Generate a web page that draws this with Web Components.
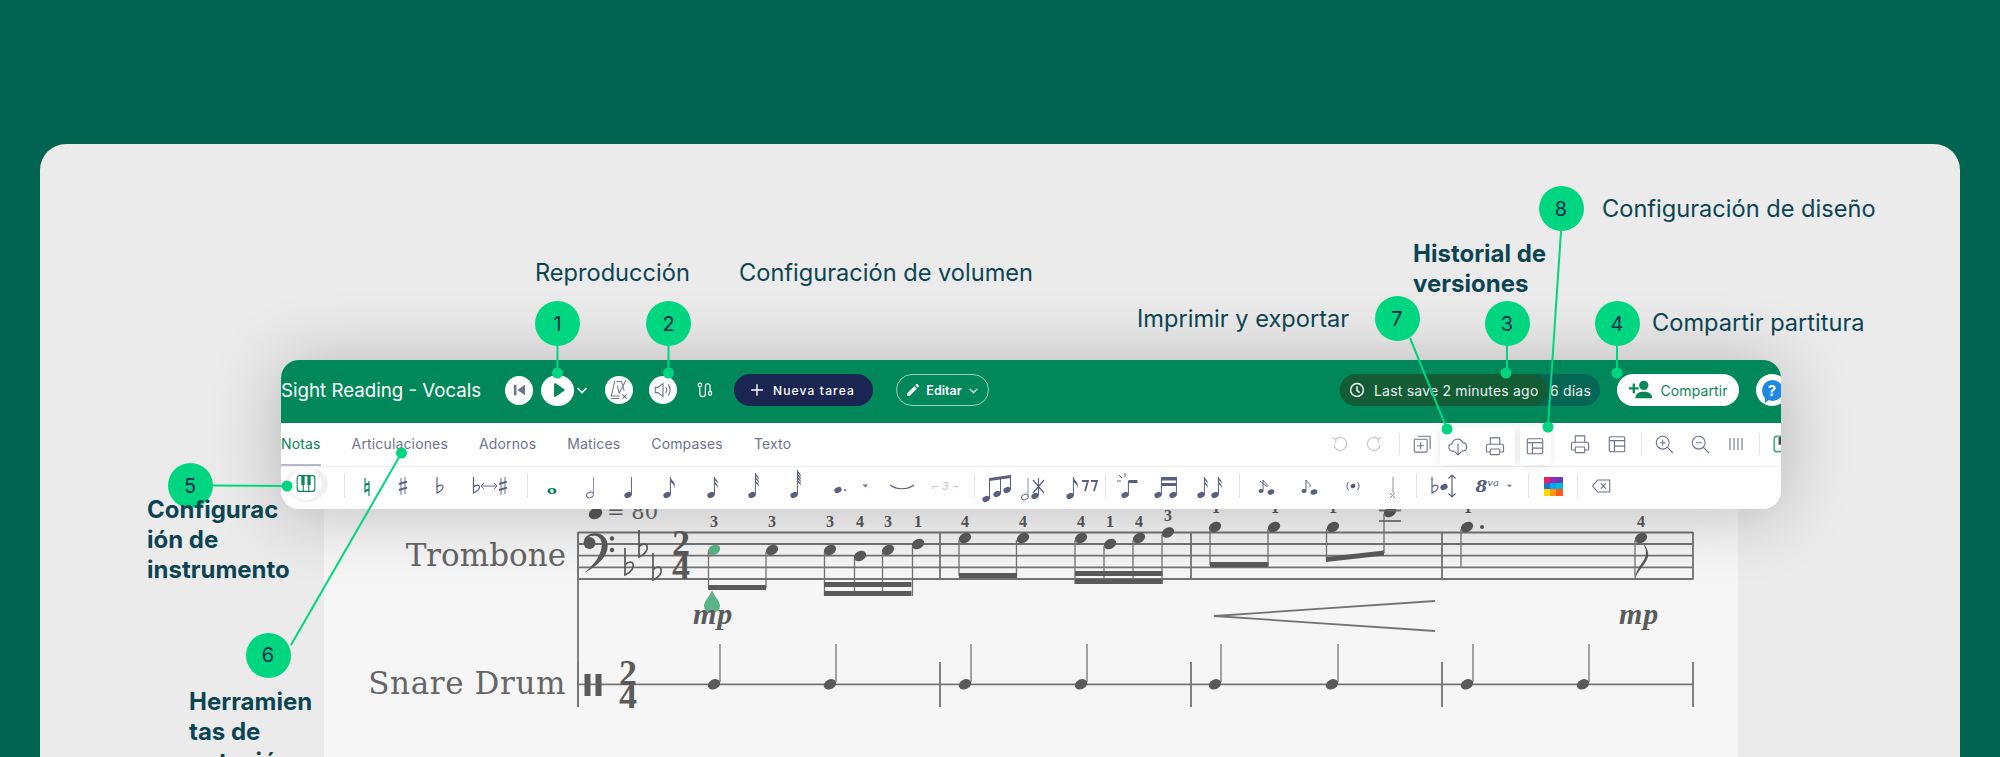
<!DOCTYPE html>
<html lang="es">
<head>
<meta charset="utf-8">
<title>Sight Reading</title>
<style>
  html, body { margin: 0; height: 757px; overflow: hidden; background: #006450; }
</style>
</head>
<body>
<sr-page>
  <sr-app></sr-app>
  <sr-score></sr-score>
  <sr-callouts>
    <sr-pin n="1" x="557.5" y="323.5"></sr-pin>
    <sr-pin n="2" x="668.5" y="323.5"></sr-pin>
    <sr-pin n="3" x="1507" y="323.5"></sr-pin>
    <sr-pin n="4" x="1617" y="323.5"></sr-pin>
    <sr-pin n="5" x="190" y="485.5"></sr-pin>
    <sr-pin n="6" x="268" y="655"></sr-pin>
    <sr-pin n="7" x="1397" y="318.5"></sr-pin>
    <sr-pin n="8" x="1561" y="208.5"></sr-pin>
    <sr-label x="535" y="258">Reproducción</sr-label>
    <sr-label x="739" y="258">Configuración de volumen</sr-label>
    <sr-label x="1137" y="304">Imprimir y exportar</sr-label>
    <sr-label x="1602" y="194">Configuración de diseño</sr-label>
    <sr-label x="1652" y="308">Compartir partitura</sr-label>
    <sr-label x="1413" y="239" bold>Historial de<br>versiones</sr-label>
    <sr-label x="147" y="495" bold>Configurac<br>ión de<br>instrumento</sr-label>
    <sr-label x="189" y="687" bold>Herramien<br>tas de<br>notación</sr-label>
  </sr-callouts>
</sr-page>

<script>
// colores compartidos de los iconos
const INK = '#6d7394';
const NOTE = '#585f80';
const SOFT = '#c4c6d0';
const GREEN = '#0a8659';

const head = (x, y = 23, c = NOTE) => `<ellipse cx="${x}" cy="${y}" rx="3.800" ry="2.800" fill="${c}" transform="rotate(-25 ${x} ${y})"/>`;
const stem = (x, y1, y2 = 5, c = NOTE) => `<path d="M${x} ${y1}V${y2}" stroke="${c}" stroke-width="1" fill="none"/>`;
const flag = (x, y) => `<path d="M${x} ${y}c1 4 6 5 4 11c0-3-2-5-4-6z" fill="${NOTE}"/>`;
const tick = (x, y) => `<path d="M${x} ${y}c.5 2 4 3 3.500 7c-.5-2-2-3-3.500-4z" fill="${NOTE}"/>`;
const ticks = (x, y, n, step) => Array.from({ length: n }, (_, i) => tick(x, y + i * step)).join('');
const quarter = (x, y = 23) => head(x, y) + stem(x + 3.4, y);
const flatSign = (x, y = 14, c = NOTE) => `<path d="M${x} ${y - 9}V${y + 7}c4-2 6-4 6-6s-3-3-6 0" stroke="${c}" stroke-width="1.200" fill="none"/>`;
const sharpSign = (x, y = 14, c = NOTE) => `<path d="M${x - 2} ${y - 8}V${y + 9}M${x + 2} ${y - 9}V${y + 8}" stroke="${c}" stroke-width=".9" fill="none"/><path d="M${x - 4} ${y - 2}l8-2.400M${x - 4} ${y + 4}l8-2.400" stroke="${c}" stroke-width="1.900" fill="none"/>`;
const caret = '<path d="M9 12h8l-4 4z" fill="' + INK + '"/>';

const ICONS = {
  // barra superior
  skip: `<path d="M8 8h3v12H8zM21 8v12l-9-6z" fill="${INK}"/>`,
  play: `<path d="M9 6.500c0-1 1-1.500 2-1l11 7.400c.8.500.8 1.600 0 2.100L11 22.500c-1 .5-2 0-2-1z" fill="${GREEN}"/>`,
  chev: '<path d="M7 11l7 7 7-7" stroke="#fff" stroke-width="2.400" fill="none"/>',
  metro: `<g stroke="${INK}" stroke-width="1.200" fill="none"><path d="M11 4h6l3 11M9 4L5 21h10"/><path d="M5 24h9M12 9l2 8M22 3l-8 15"/></g><path d="M18 19l5 5M23 19l-5 5" stroke="${INK}" stroke-width="1.300"/>`,
  volume: `<g stroke="${INK}" stroke-width="1.300" fill="none"><path d="M5 11v6h3l6 4.500V6.500L8 11z"/><path d="M17 10.500c1.500 2 1.500 5 0 7M20 7.500c3 3.500 3 9.500 0 13"/></g>`,
  mix: '<g stroke="#fff" stroke-width="1.500" fill="none"><circle cx="7.500" cy="7.500" r="2.200"/><path d="M7.500 9.700v9c0 5 7 5 7 0V9c0-4 6-4 6 0v7"/><rect x="18.700" y="16" width="3.600" height="4.500" rx="1"/></g>',
  plus: '<path d="M14 5v18M5 14h18" stroke="#fff" stroke-width="2.200" fill="none"/>',
  pencil: '<path d="M5 19L16 8l4 4L9 23H5zM17.500 6.500L19 5c.6-.6 1.400-.6 2 0l2 2c.6.600.6 1.400 0 2l-1.500 1.500z" fill="#fff"/>',
  clock: '<circle cx="14" cy="14" r="7.500" stroke="#fff" stroke-width="1.700" fill="none"/><path d="M14 9.500V14.500l3 2.500" stroke="#fff" stroke-width="1.700" fill="none"/>',
  share: `<g fill="${GREEN}"><circle cx="17" cy="9" r="5"/><path d="M8 22c0-4 4-6 9-6s9 2 9 6v1H8z"/><path d="M5 7h2.500v4H11.500v2.500H7.500v4H5v-4H1V11h4z"/></g>`,
  // pestañas
  undo: `<g stroke="${SOFT}" stroke-width="1.400" fill="none"><path d="M9 8.500a7.500 7.500 0 1 1-2.200 6"/><path d="M5 6.500l4.500 2.500-1.500 4"/></g>`,
  redo: `<g stroke="${SOFT}" stroke-width="1.400" fill="none"><path d="M19 8.500a7.500 7.500 0 1 0 2.200 6"/><path d="M23 6.500l-4.500 2.500 1.500 4"/></g>`,
  copy: `<g stroke="${INK}" stroke-width="1.300" fill="none"><rect x="5" y="8.500" width="15" height="15" rx="1"/><path d="M9 5h13.500c.6 0 1 .4 1 1v14M12.500 12v8M8.500 16h8"/></g>`,
  cloud: `<g stroke="${INK}" stroke-width="1.300" fill="none"><path d="M10 20H8c-6 0-6-8-1-8.500C8 5 17 4 19.500 10c6 0 6.500 10-.5 10h-1"/><path d="M14 11.500V24M10 20.500l4 4 4-4"/></g>`,
  print: `<g stroke="${INK}" stroke-width="1.300" fill="none"><path d="M8.500 12V4.500h11V12"/><path d="M8.500 21H5c-.8 0-1-.6-1-1v-6c0-1.500 1-2 2-2h16c1 0 2 .5 2 2v6c0 .4-.2 1-1 1h-3.500"/><rect x="8.500" y="17.500" width="11" height="6.500" rx="1"/></g>`,
  layout: `<g stroke="${INK}" stroke-width="1.300" fill="none"><rect x="5" y="5.500" width="18" height="17.500" rx="1.500"/><path d="M5 10h18M11 10v13M11 16.500h12"/></g>`,
  zoomin: `<g stroke="${INK}" stroke-width="1.300" fill="none"><circle cx="12.500" cy="12.500" r="7.500"/><path d="M18 18l6.500 6.500M12.500 9v7M9 12.500h7"/></g>`,
  zoomout: `<g stroke="${INK}" stroke-width="1.300" fill="none"><circle cx="12.500" cy="12.500" r="7.500"/><path d="M18 18l6.500 6.500M9 12.500h7"/></g>`,
  bars: `<path d="M7 7v14M11.700 7v14M16.300 7v14M21 7v14" stroke="${INK}" stroke-width="1.300" fill="none"/>`,
  colsgreen: `<rect x="5" y="5" width="18" height="18" rx="3" stroke="#4bab82" stroke-width="2" fill="none"/><path d="M10 6v9h3V6z" fill="#3a4a55"/>`,
  // herramientas de notación
  piano: `<g stroke="${GREEN}" stroke-width="1.200" fill="none"><rect x="4.500" y="5" width="19" height="17" rx="2.500"/><path d="M11 15v7M17 15v7"/></g><path d="M9 5h3.500v10H9zM15.500 5H19v10h-3.500z" fill="${GREEN}"/>`,
  natural: `<path d="M12 6v15M16 9v15" stroke="${GREEN}" stroke-width="1.200" fill="none"/><path d="M12 13l4-1.500M12 19l4-1.500" stroke="${GREEN}" stroke-width="2.400" fill="none"/>`,
  sharp: sharpSign(14),
  flat: flatSign(12),
  flatsharp: flatSign(-1.5) + `<path d="M6 14h16M9 11l-3 3 3 3M19 11l3 3-3 3" stroke="${NOTE}" stroke-width=".9" fill="none"/>` + sharpSign(28),
  whole: `<ellipse cx="14" cy="19" rx="4.500" ry="3" fill="${GREEN}"/><ellipse cx="14" cy="19" rx="1.600" ry="2" fill="#fff" transform="rotate(-30 14 19)"/>`,
  half: `<ellipse cx="12" cy="23" rx="3.600" ry="2.600" fill="none" stroke="${NOTE}" stroke-width="1" transform="rotate(-25 12 23)"/>` + stem(15.5, 23, 5, '#8a8fa8'),
  quarter: quarter(12),
  eighth: quarter(10) + flag(13.4, 5),
  n16: quarter(10) + ticks(13.4, 5, 2, 4),
  n32: head(10) + stem(13.4, 23, 1) + ticks(13.4, 1, 3, 3.5),
  n64: head(10) + stem(13.4, 23, -2) + ticks(13.4, -2, 4, 3),
  dotted: head(11, 18) + `<circle cx="18" cy="18" r="1" fill="${NOTE}"/>`,
  caret,
  tie: `<path d="M2 13c7 5 17 5 24 0" stroke="${NOTE}" stroke-width="1.100" fill="none"/>`,
  triplet: head(4, 27) + head(15, 22) + head(25, 18) + `<path d="M7.500 27V6M18.500 22V5M28.500 18V3" stroke="${NOTE}" stroke-width="1" fill="none"/><path d="M7.500 6l21-3v3l-21 3z" fill="${NOTE}"/>`,
  cross: `<ellipse cx="5" cy="25" rx="3.500" ry="2.600" fill="none" stroke="${NOTE}" stroke-width="1" transform="rotate(-25 5 25)"/>` + stem(8, 25, 6, '#8a8fa8') + head(15, 24) + stem(18.500, 24, 6) + `<path d="M13 8l11 13M24 8l-11 13" stroke="${NOTE}" stroke-width="1.200" fill="none"/>`,
  rests: head(2, 24) + stem(5.4, 24, 5) + flag(5.4, 5) + `<path d="M14 9h6l-3 10M23 9h6l-3 10" stroke="${NOTE}" stroke-width="1.800" fill="none"/>`,
  spark: head(11, 23) + stem(14.4, 23, 9) + `<path d="M14.500 8h9v3h-9z" fill="${NOTE}"/><path d="M11 1v4M5 3l3 3M3 9h4" stroke="${NOTE}" stroke-width="1" fill="none"/>`,
  beam16: head(5, 23) + head(20, 23) + stem(8.4, 23, 5) + stem(23.4, 23, 5) + `<path d="M8.500 5h15v3.500h-15zM8.500 11h15v3h-15z" fill="${NOTE}"/>`,
  flag16: head(4, 23) + stem(7.4, 23, 5) + ticks(7.4, 5, 2, 4) + head(18, 23) + stem(21.4, 23, 5) + ticks(21.4, 5, 2, 4),
  grace: `<ellipse cx="8" cy="19" rx="2.500" ry="2" fill="${NOTE}"/><path d="M10 19V8c1 3 5 3 4 7" stroke="${NOTE}" fill="none"/><path d="M7 9l6 5" stroke="${NOTE}" fill="none"/><ellipse cx="18" cy="20" rx="3.500" ry="2.600" fill="${NOTE}" transform="rotate(-20 18 20)"/>`,
  grace2: `<ellipse cx="8" cy="19" rx="2.500" ry="2" fill="${NOTE}"/><path d="M10 19V8c1 3 5 3 4 7" stroke="${NOTE}" fill="none"/><ellipse cx="18" cy="20" rx="3.500" ry="2.600" fill="${NOTE}" transform="rotate(-20 18 20)"/>`,
  paren: `<ellipse cx="14" cy="14" rx="2.600" ry="2.100" fill="${NOTE}" transform="rotate(-25 14 14)"/><path d="M9.500 10c-2 3-2 5 0 8M18.500 10c2 3 2 5 0 8" stroke="${NOTE}" stroke-width="1" fill="none"/>`,
  ghost: stem(15, 5, 21, '#8a8fa8') + `<path d="M12 21l5 5M17 21l-5 5" stroke="#8a8fa8" stroke-width="1" fill="none"/>`,
  flatarrow: flatSign(3) + head(15, 15) + `<path d="M23 3v22M19.500 6.500L23 3l3.500 3.500M19.500 21.500L23 25l3.500-3.500" stroke="${NOTE}" stroke-width="1.200" fill="none"/>`,
  erase: `<g stroke="${INK}" stroke-width="1.300" fill="none"><path d="M9 7h14v14H9l-6-7z"/><path d="M12.500 11l6 6M18.500 11l-6 6"/></g>`
};

class SrIcon extends HTMLElement {
  constructor() {
    super();
    this.attachShadow({ mode: 'open' });
    const size = this.getAttribute('size') || 28;
    this.shadowRoot.innerHTML = `
      <style>
        :host { display: inline-flex; flex: none; width: ${size}px; height: ${size}px; }
        svg { width: 100%; height: 100%; overflow: visible; display: block; }
      </style>
      <svg viewBox="0 0 28 28">${ICONS[this.getAttribute('name')] || ''}</svg>`;
  }
}
customElements.define('sr-icon', SrIcon);

// botón redondo blanco de la barra verde
class SrRound extends HTMLElement {
  constructor() {
    super();
    this.attachShadow({ mode: 'open' });
    const w = this.getAttribute('w') || 28;
    const h = this.getAttribute('h') || w;
    this.shadowRoot.innerHTML = `
      <style>
        :host { display: flex; flex: none; width: ${w}px; height: ${h}px; border-radius: 50%; background: #fff;
                align-items: center; justify-content: center; }
      </style>
      <slot></slot>`;
  }
}
customElements.define('sr-round', SrRound);

class SrPill extends HTMLElement {
  constructor() {
    super();
    this.attachShadow({ mode: 'open' });
    this.shadowRoot.innerHTML = `
      <style>
        :host { display: inline-flex; flex: none; align-items: center; height: 32px; border-radius: 16px;
                box-sizing: border-box; white-space: nowrap; }
      </style>
      <slot></slot>`;
  }
}
customElements.define('sr-pill', SrPill);

class SrApp extends HTMLElement {
  constructor() {
    super();
    this.attachShadow({ mode: 'open' });
    const tool = (name, gap, size) => `<sr-icon name="${name}" style="margin-left:${gap}px"${size ? ` size="${size}"` : ''}></sr-icon>`;
    this.shadowRoot.innerHTML = `
      <style>
        :host { display: flex; flex-direction: column; width: 1500px; height: 149px; border-radius: 18px; overflow: hidden;
                background: #fff; position: relative; z-index: 1; box-shadow: 0 4px 70px rgba(0,0,0,.24);
                font-family: Inter, "Noto Sans", sans-serif; }
        .top { display: flex; align-items: center; height: 63px; flex: none; padding-bottom: 3px; box-sizing: border-box; background: #00875a; color: #fff; }
        .title { font-size: 18.700px; width: 224px; flex: none; white-space: nowrap; }
        .new { width: 139px; background: #1a2552; color: #fff; font-size: 12px; font-weight: 500; letter-spacing: 1.150px; margin-left: 18px; padding-left: 14px; gap: 7px; }
        .edit { width: 93px; justify-content: center; border: 1px solid rgba(255,255,255,.6); color: #fff; font-size: 12.500px; font-weight: 600; margin-left: 23px; gap: 4px; }
        .hist { position: relative; margin-left: 351px; width: 260px; background: #066655; color: #e8f2ee; font-size: 14px; justify-content: flex-end; padding-right: 9px; letter-spacing: .2px; }
        .save { position: absolute; left: 0; top: 0; width: 208px; background: #125c36; gap: 5px; padding-left: 5px; letter-spacing: .2px; }
        .share { width: 122px; justify-content: center; background: #fff; color: ${GREEN}; font-size: 14px; margin-left: 17px; gap: 6px; letter-spacing: .1px; }
        .help { margin-left: 17px; color: #fff; font-size: 15px; font-weight: 700; }
        .bubble { position: relative; width: 21px; height: 21px; border-radius: 50%; background: #1e88e5; display: flex; align-items: center; justify-content: center; }
        .bubble::after { content: ""; position: absolute; left: 3px; bottom: -3px; width: 7px; height: 6px; background: #1e88e5; clip-path: polygon(0 100%, 100% 0, 0 0); }
        .tabs { display: flex; align-items: center; height: 44px; flex: none; box-sizing: border-box; padding-bottom: 2px; border-bottom: 1px solid #f0f0f2; }
        .names { display: flex; flex: 0 0 1047px; gap: 31px; height: 100%; align-items: center; font-size: 14px; color: #6d7394; }
        .names span { position: relative; line-height: 41px; letter-spacing: .15px; }
        .names .on { color: ${GREEN}; }
        .names .on::after { content: ""; position: absolute; left: 0; right: 0; bottom: -2px; height: 2px; background: #b6bacb; }
        .sep { flex: none; width: 1px; height: 22px; background: #e3e4ea; }
        .hl { display: flex; flex: none; align-items: center; height: 38px; margin-top: 4px; background: #fff; border-radius: 3px;
              box-shadow: 0 1px 8px rgba(40,40,60,.12); position: relative; }
        .tools { display: flex; align-items: center; height: 42px; flex: none; padding-bottom: 4px; box-sizing: border-box; }
        .piano { flex: none; width: 32px; height: 32px; border-radius: 50%; background: #fff; margin-left: 8.500px; display: flex; align-items: center; justify-content: center; box-shadow: -6px 0 0 -1px #f4f4f6, 7px 0 0 -1px #f0f0f2, 0 1px 4px rgba(0,0,0,.12); position: relative; top: -2px; }
        .tools .sep { height: 24px; }
        .ottava { flex: none; width: 28px; font-family: "DejaVu Serif", "Liberation Serif", serif; font-style: italic; color: ${NOTE}; font-size: 17px; font-weight: 700; line-height: 1; margin-left: 19px; white-space: nowrap; }
        .ottava sup { font-size: 10px; font-weight: 400; vertical-align: 6px; line-height: 0; }
        .trip { flex: none; width: 28px; text-align: center; font-size: 11px; font-style: italic; color: ${SOFT}; margin-left: 16px; white-space: nowrap; }
        .swatch { flex: none; display: grid; grid-template-columns: repeat(3, 1fr); width: 19px; height: 19px; margin-left: 15px; }
        .swatch i { display: block; }
      </style>
      <div class="top">
        <div class="title">Sight Reading - Vocals</div>
        <sr-round w="28" h="29"><sr-icon name="skip" size="24"></sr-icon></sr-round>
        <sr-round w="33" h="31" style="margin-left:8px"><sr-icon name="play" size="22"></sr-icon></sr-round>
        <sr-icon name="chev" size="18" style="margin-left:-1px"></sr-icon>
        <sr-round style="margin-left:14px"><sr-icon name="metro" size="24"></sr-icon></sr-round>
        <sr-round style="margin-left:16px"><sr-icon name="volume" size="24"></sr-icon></sr-round>
        <sr-icon name="mix" size="22" style="margin-left:17px"></sr-icon>
        <sr-pill class="new"><sr-icon name="plus" size="18"></sr-icon>Nueva tarea</sr-pill>
        <sr-pill class="edit"><sr-icon name="pencil" size="18"></sr-icon>Editar<sr-icon name="chev" size="15"></sr-icon></sr-pill>
        <sr-pill class="hist">
          <sr-pill class="save"><sr-icon name="clock" size="24"></sr-icon>Last save 2 minutes ago</sr-pill>
          6 días
        </sr-pill>
        <sr-pill class="share"><sr-icon name="share" size="26"></sr-icon>Compartir</sr-pill>
        <sr-round w="32" h="32" class="help"><span class="bubble">?</span></sr-round>
      </div>
      <div class="tabs">
        <div class="names">
          <span class="on">Notas</span><span>Articulaciones</span><span>Adornos</span><span>Matices</span><span>Compases</span><span>Texto</span>
        </div>
        ${tool('undo', 0, 24)}${tool('redo', 10, 24)}
        <div class="sep" style="margin-left:13px"></div>
        ${tool('copy', 10, 24)}
        <div class="hl" style="margin-left:6px;width:75px">${tool('cloud', 6, 24)}${tool('print', 13, 24)}</div>
        <div class="hl" style="margin-left:5px;width:31px">${tool('layout', 3, 24)}</div>
        ${tool('print', 17, 24)}${tool('layout', 13, 24)}
        <div class="sep" style="margin-left:12px"></div>
        ${tool('zoomin', 10, 24)}${tool('zoomout', 12, 24)}${tool('bars', 12, 24)}
        <div class="sep" style="margin-left:11px"></div>
        ${tool('colsgreen', 10, 24)}
      </div>
      <div class="tools">
        <div class="piano"><sr-icon name="piano" size="26"></sr-icon></div>
        <div class="sep" style="margin-left:22px"></div>
        ${tool('natural', 8)}${tool('sharp', 8.5)}${tool('flat', 7.5)}
        ${tool('flatsharp', 22)}
        <div class="sep" style="margin-left:24px"></div>
        ${tool('whole', 10)}${tool('half', 12)}${tool('quarter', 10.5)}${tool('eighth', 12.5)}${tool('n16', 16)}${tool('n32', 13)}${tool('n64', 14)}${tool('dotted', 15)}
        <sr-icon name="caret" size="20" style="margin-left:1px"></sr-icon>
        ${tool('tie', 12)}
        <span class="trip">⌐ 3 ¬</span>
        <div class="sep" style="margin-left:14px"></div>
        ${tool('triplet', 7)}${tool('cross', 10)}${tool('rests', 20)}
        <div class="sep" style="margin-left:9px"></div>
        ${tool('spark', 8)}${tool('beam16', 11)}${tool('flag16', 16)}
        <div class="sep" style="margin-left:14px"></div>
        ${tool('grace', 13)}${tool('grace2', 15)}${tool('paren', 15)}${tool('ghost', 11)}
        <div class="sep" style="margin-left:10px"></div>
        ${tool('flatarrow', 12)}
        <span class="ottava">8<sup>va</sup></span>
        <sr-icon name="caret" size="18" style="margin-left:-3px"></sr-icon>
        <div class="sep" style="margin-left:9px"></div>
        <div class="swatch">${['#e91e63', '#9c27b0', '#673ab7', '#1976d2', '#03a9f4', '#00bcd4', '#ffd600', '#ff9800', '#ff5722'].map(c => `<i style="background:${c}"></i>`).join('')}</div>
        <div class="sep" style="margin-left:14px"></div>
        ${tool('erase', 12, 24)}
      </div>`;
  }
}
customElements.define('sr-app', SrApp);

class SrScore extends HTMLElement {
  constructor() {
    super();
    this.attachShadow({ mode: 'open' });
    const INKS = '#5a5a5a';
    const noteHead = (x, y, c = INKS) => `<ellipse cx="${x}" cy="${y}" rx="6.500" ry="4.800" fill="${c}" transform="rotate(-28 ${x} ${y})"/>`;
    const line = (x1, y1, x2, y2, w = 1.800) => `<line x1="${x1}" y1="${y1}" x2="${x2}" y2="${y2}" stroke="#747474" stroke-width="${w}"/>`;
    const beam = (x1, x2, y, h = 5) => `<rect x="${x1}" y="${y}" width="${x2 - x1}" height="${h}" fill="${INKS}"/>`;
    const finger = (x, y, t) => `<text x="${x}" y="${y}" class="f">${t}</text>`;
    const flat = (x, top, b) => `<path d="M${x} ${top}V${b}C${x + 7} ${b - 3} ${x + 9} ${b - 8} ${x + 8} ${b - 11}C${x + 7} ${b - 14} ${x + 2} ${b - 13} ${x} ${b - 10}" stroke="${INKS}" stroke-width="1.700" fill="none"/>`;

    let s = '';
    // pentagrama del trombón
    [532.5, 544, 555.7, 567.3, 579].forEach(y => { s += line(578, y, 1693, y); });
    [578, 940, 1191, 1442, 1693].forEach(x => { s += line(x, 532, x, 579.500); });
    s += line(578, 532, 578, 707);
    // clave de fa
    s += `<path d="M584 540C586 534 594 532 600 534C607 537 609 544 607 551C604 560 594 568 584 573C591 567 599 559 601 550C603 543 601 537 596 536C591 535 587 537 585 541Z" fill="${INKS}"/><circle cx="589.500" cy="543" r="6" fill="${INKS}"/><circle cx="612" cy="538.500" r="2.200" fill="${INKS}"/><circle cx="612" cy="550" r="2.200" fill="${INKS}"/>`;
    s += flat(625, 548, 575) + flat(639, 530, 557) + flat(653, 553, 580);
    s += `<text x="681" y="555" class="t">2</text><text x="681" y="579" class="t">4</text>`;
    s += `<ellipse cx="595.500" cy="513.500" rx="7" ry="5.500" fill="${INKS}" transform="rotate(-28 595.500 513.500)"/><text x="607" y="519" class="tempo">= 80</text>`;
    // compás 1
    s += `<path d="M712 590C714 596 720 601 720 606A8 7 0 0 1 704 606C704 601 710 596 712 590Z" fill="#5cb388"/>`;
    s += noteHead(714, 550, '#5cb388') + noteHead(772, 550);
    s += line(708.5, 552, 708.5, 588, 1.300) + line(766, 552, 766, 588, 1.300) + beam(708, 766, 585);
    [[830, 550], [860, 556], [888, 550], [918, 544]].forEach(([x, y]) => { s += noteHead(x, y) + line(x - 5.500, y + 2, x - 5.500, 596, 1.300); });
    s += beam(824, 911.500, 582) + beam(824, 911.500, 591);
    [[714, 3], [772, 3], [830, 3], [860, 4], [888, 3], [918, 1]].forEach(([x, t]) => { s += finger(x, 527, t); });
    // compás 2
    s += noteHead(965, 538) + noteHead(1023, 538) + line(959, 540, 959, 576, 1.300) + line(1016.500, 540, 1016.500, 576, 1.300) + beam(959, 1017, 573);
    [[1081, 538], [1110, 544], [1139, 538], [1168, 532.500]].forEach(([x, y]) => { s += noteHead(x, y) + line(x - 6, y + 2, x - 6, 584, 1.300); });
    s += beam(1075, 1162.500, 571) + beam(1075, 1162.500, 579);
    [[965, 4], [1023, 4], [1081, 4], [1110, 1], [1139, 4]].forEach(([x, t]) => { s += finger(x, 527, t); });
    s += finger(1168, 521, 3);
    // compás 3
    s += noteHead(1215, 527) + noteHead(1274, 527) + line(1210, 529, 1210, 565, 1.300) + line(1268, 529, 1268, 565, 1.300) + beam(1210, 1268.500, 562);
    s += noteHead(1333, 527) + line(1326.500, 529, 1326.500, 560, 1.300) + noteHead(1390, 512) + line(1384, 514, 1384, 553, 1.300);
    s += `<path d="M1326 557L1384 550.500V555.500L1326 562Z" fill="${INKS}"/>`;
    s += line(1379, 521, 1401, 521) + line(1379, 510.500, 1401, 510.500);
    [1216, 1275, 1333, 1468].forEach(x => { s += finger(x, 513, 1); });
    // compás 4
    s += noteHead(1467, 527) + line(1461, 529, 1461, 567, 1.300) + `<circle cx="1482" cy="527" r="2" fill="${INKS}"/>`;
    s += noteHead(1641, 538) + line(1635, 540, 1635, 579, 1.300) + `<path d="M1635 579C1636 566 1646 562 1646 553C1646 548 1644 545 1643 543C1649 550 1650 556 1645 563C1640 570 1637 573 1635 579Z" fill="${INKS}"/>`;
    s += finger(1641, 527, 4);
    // reguladores y dinámica
    s += line(1214, 616, 1435, 601) + line(1214, 616, 1435, 631);
    s += `<text x="693" y="624" class="d">mp</text><text x="1619" y="624" class="d">mp</text>`;
    // redoblante
    s += line(578, 684.3, 1693, 684.3);
    [578, 940, 1191, 1442, 1693].forEach(x => { s += line(x, 662, x, 707); });
    s += `<rect x="584.500" y="674" width="6" height="22" fill="${INKS}"/><rect x="595.500" y="674" width="6" height="22" fill="${INKS}"/>`;
    s += `<text x="628" y="685" class="t">2</text><text x="628" y="708" class="t">4</text>`;
    [714, 830, 965, 1081, 1215, 1332, 1467, 1583].forEach(x => { s += noteHead(x, 684.300) + line(x + 6, 682, x + 6, 644, 1.300); });
    // nombres de instrumento
    s += `<text x="566" y="566" class="i">Trombone</text><text x="566" y="694" class="i" letter-spacing=".6">Snare Drum</text>`;

    this.shadowRoot.innerHTML = `
      <style>
        :host { display: block; flex: none; width: 1414px; height: 300px; margin: -29px 0 0 43px; background: #f6f6f6; }
        svg { display: block; width: 1414px; height: 300px; }
        text { font-family: "DejaVu Serif", "Liberation Serif", serif; fill: ${INKS}; }
        .i { font-size: 31px; text-anchor: end; fill: #666; }
        .f { font-family: "Liberation Serif", serif; font-size: 16px; font-weight: 700; text-anchor: middle; }
        .t { font-family: "Liberation Serif", serif; font-size: 36px; font-weight: 700; text-anchor: middle; }
        .d { font-family: "Liberation Serif", serif; font-size: 30px; font-weight: 700; font-style: italic; letter-spacing: 1px; }
        .tempo { font-size: 21px; fill: #666; }
      </style>
      <svg viewBox="324 480 1414 300">${s}</svg>`;
  }
}
customElements.define('sr-score', SrScore);

class SrPage extends HTMLElement {
  constructor() {
    super();
    this.attachShadow({ mode: 'open' });
    this.shadowRoot.innerHTML = `
      <style>
        :host { display: block; height: 757px; box-sizing: border-box; padding: 144px 40px 0; overflow: hidden; position: relative; }
        .card { height: 700px; background: #ebebeb; border-radius: 26px; padding: 216px 0 0 241px; box-sizing: border-box; overflow: hidden; }
      </style>
      <div class="card"><slot></slot></div>`;
  }
}
customElements.define('sr-page', SrPage);

// capa de anotaciones: líneas, puntos, números y textos
class SrCallouts extends HTMLElement {
  constructor() {
    super();
    this.attachShadow({ mode: 'open' });
    const lines = [
      [557.5, 346, 557.5, 373], [668.5, 346, 668.5, 373], [1507, 346, 1507, 373], [1617, 346, 1617, 373],
      [212, 485.5, 287, 486], [291, 645, 401.5, 453], [1410, 338, 1447, 429], [1561, 231, 1548, 427]
    ];
    const dots = [[557.5, 373], [668.5, 373], [1506, 373], [1617, 373], [287, 486], [401.5, 453], [1447, 429], [1548, 427]];
    this.shadowRoot.innerHTML = `
      <style>
        :host { position: absolute; left: 0; top: 0; width: 2000px; height: 757px; z-index: 2; overflow: hidden; }
        svg { position: absolute; left: 0; top: 0; }
      </style>
      <svg width="2000" height="757">
        ${lines.map(l => `<line x1="${l[0]}" y1="${l[1]}" x2="${l[2]}" y2="${l[3]}" stroke="#00d67f" stroke-width="2"/>`).join('')}
        ${dots.map(d => `<circle cx="${d[0]}" cy="${d[1]}" r="5.500" fill="#00d67f"/>`).join('')}
      </svg>
      <slot></slot>`;
  }
}
customElements.define('sr-callouts', SrCallouts);

class SrPin extends HTMLElement {
  constructor() {
    super();
    this.attachShadow({ mode: 'open' });
    this.shadowRoot.innerHTML = `
      <style>
        :host { position: absolute; left: ${this.getAttribute('x') - 22.5}px; top: ${this.getAttribute('y') - 22.5}px;
                width: 45px; height: 45px; border-radius: 50%; background: #00d67f; color: #1d2b4f;
                display: flex; align-items: center; justify-content: center; font: 400 20px Inter, "Noto Sans", sans-serif; }
      </style>
      ${this.getAttribute('n')}`;
  }
}
customElements.define('sr-pin', SrPin);

class SrLabel extends HTMLElement {
  constructor() {
    super();
    this.attachShadow({ mode: 'open' });
    const bold = this.hasAttribute('bold');
    this.shadowRoot.innerHTML = `
      <style>
        :host { position: absolute; left: ${this.getAttribute('x')}px; top: ${this.getAttribute('y')}px; white-space: nowrap;
                color: #0b4452; font: ${bold ? 700 : 400} ${bold ? 24 : 23.6}px/30px Inter, "Noto Sans", sans-serif; }
      </style>
      <slot></slot>`;
  }
}
customElements.define('sr-label', SrLabel);
</script>
</body>
</html>
